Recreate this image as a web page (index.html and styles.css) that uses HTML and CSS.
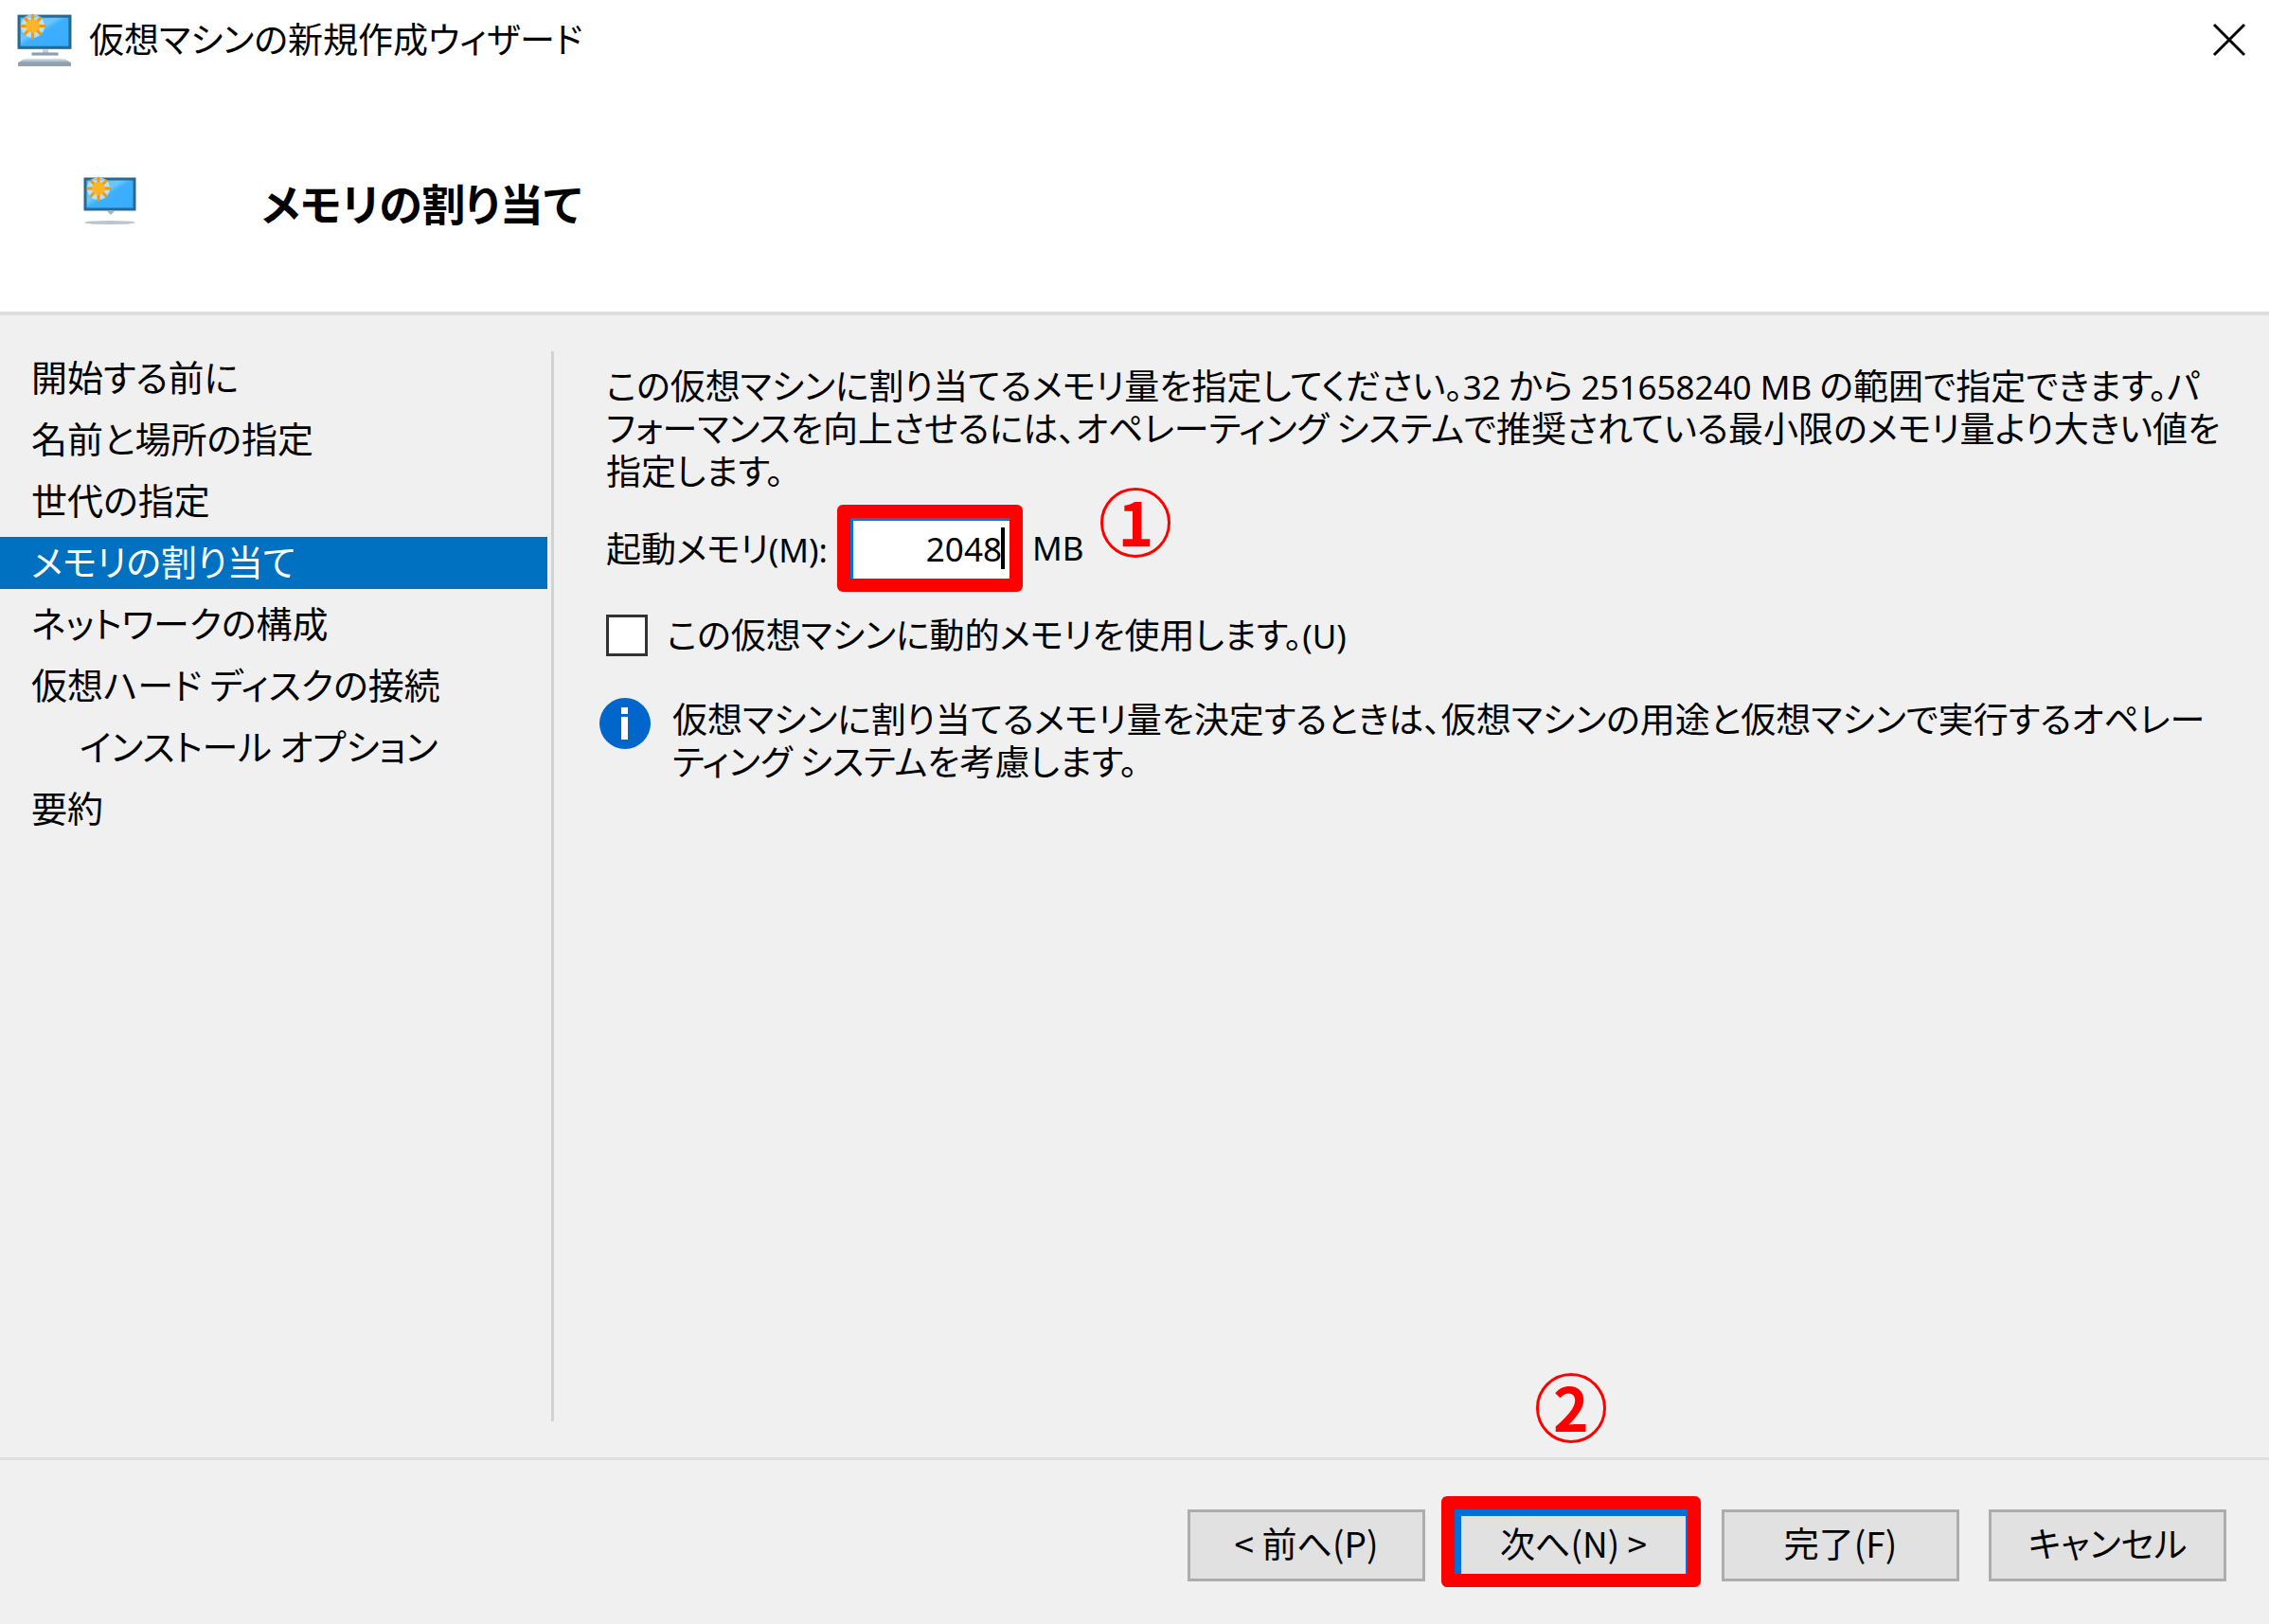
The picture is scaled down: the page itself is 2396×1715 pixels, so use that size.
FILE: index.html
```html
<!DOCTYPE html>
<html lang="ja">
<head>
    <meta charset="utf-8"/>
    <meta name="viewport" content="width=device-width, initial-scale=1"/>
    <title>仮想マシンの新規作成ウィザード</title>
    <link rel="stylesheet" href="styles.css">
</head>
<body>

    <!-- monitor icon, used in the title bar and in the header -->
    <svg class="symbols" aria-hidden="true">
        <defs>
            <linearGradient id="screen-fill" x1="0" y1="0" x2="1" y2="1">
                <stop offset="0" stop-color="#5cc0ff"/>
                <stop offset="0.4" stop-color="#6cc6ff"/>
                <stop offset="0.5" stop-color="#3cb0ff"/>
                <stop offset="1" stop-color="#38aaf8"/>
            </linearGradient>
            <linearGradient id="base-fill" x1="0" y1="0" x2="0" y2="1">
                <stop offset="0" stop-color="#e4e9ee"/>
                <stop offset="1" stop-color="#8496aa"/>
            </linearGradient>
        </defs>
        <symbol id="monitor" viewBox="0 0 56 38">
            <rect x="2" y="4" width="52" height="32" fill="url(#screen-fill)" stroke="#266a94" stroke-width="3"/>
            <circle cx="16" cy="14" r="12" fill="#d9eefb" opacity="0.7"/>
            <g stroke="#ee9a10" stroke-width="3" stroke-linecap="round">
                <path d="M16 3V26M5 14H28M8 6L24 22M24 6L8 22"/>
            </g>
            <circle cx="16" cy="14" r="7" fill="#ffb52a"/>
        </symbol>
    </svg>

    <header class="titlebar">
        <svg class="titlebar-icon" viewBox="0 0 56 56" aria-hidden="true">
            <use href="#monitor" width="56" height="38"/>
            <rect x="26" y="38" width="6" height="4" fill="#c4ccd4"/>
            <rect x="15" y="41" width="27" height="3" fill="#8f9dac"/>
            <path d="M1 52Q5 47 12 47H44Q51 47 55 52Z" fill="url(#base-fill)"/>
            <rect x="1" y="51" width="54" height="4" fill="#91a1b2"/>
        </svg>
        <span class="titlebar-text">仮想マシンの新規作成ウィザード</span>
        <button type="button" class="close" aria-label="閉じる">
            <svg viewBox="0 0 36 36" aria-hidden="true">
                <path d="M2 2L34 34M34 2L2 34" stroke="#000" stroke-width="3"/>
            </svg>
        </button>
    </header>

    <div class="banner">
        <svg class="banner-icon" viewBox="0 0 56 56" aria-hidden="true">
            <use href="#monitor" width="56" height="38"/>
            <path d="M25 38H33L29 42Z" fill="#aab4be"/>
            <ellipse cx="28" cy="50" rx="27" ry="2" fill="#b9c4d0"/>
        </svg>
        <h1>メモリの割り当て</h1>
    </div>

    <div class="content">
        <nav class="steps">
            <ul>
                <li>開始する前に</li>
                <li>名前と場所の指定</li>
                <li>世代の指定</li>
                <li class="active" aria-current="step">メモリの割り当て</li>
                <li>ネットワークの構成</li>
                <li>仮想ハード ディスクの接続</li>
                <li class="sub">インストール オプション</li>
                <li>要約</li>
            </ul>
        </nav>

        <main class="page">
            <p>この仮想マシンに割り当てるメモリ量を指定してください。<span class="latin">32</span> から <span class="latin">251658240 MB</span> の範囲で指定できます。パ<br>フォーマンスを向上させるには、オペレーティング システムで推奨されている最小限のメモリ量より大きい値を<br>指定します。</p>

            <div class="memory">
                <label for="memory">起動メモリ<span class="latin">(M):</span></label>
                <div class="marked field">
                    <input type="text" id="memory" class="latin" value="2048">
                    <span class="caret"></span>
                </div>
                <span class="latin">MB</span>
                <span class="number">1</span>
            </div>

            <div class="dynamic">
                <input type="checkbox" id="dynamic">
                <label for="dynamic">この仮想マシンに動的メモリを使用します。<span class="latin">(U)</span></label>
            </div>

            <div class="info">
                <svg class="info-icon" viewBox="0 0 56 56" aria-hidden="true">
                    <circle cx="28" cy="28" r="27" fill="#0066cc"/>
                    <rect x="24" y="11" width="7" height="7" fill="#fff"/>
                    <rect x="24" y="21" width="7" height="24" fill="#fff"/>
                </svg>
                <p>仮想マシンに割り当てるメモリ量を決定するときは、仮想マシンの用途と仮想マシンで実行するオペレー<br>ティング システムを考慮します。</p>
            </div>
        </main>
    </div>

    <footer class="buttons">
        <button type="button">&lt; 前へ(P)</button>
        <div class="marked next">
            <span class="number">2</span>
            <button type="button" class="default">次へ(N) &gt;</button>
        </div>
        <button type="button">完了(F)</button>
        <button type="button">キャンセル</button>
    </footer>

</body>
</html>
```
FILE: styles.css
```css
* {
    box-sizing: border-box;
}

body {
    margin: 0;
    min-height: 100vh;
    display: flex;
    flex-direction: column;
    background-color: #f0f0f0;
    color: #000;
    font-family: "Noto Sans CJK JP", sans-serif;
    font-size: 37px;
    line-height: 45px;
    font-feature-settings: "palt";
}

button, input {
    font: inherit;
    font-feature-settings: inherit;
    color: inherit;
    margin: 0;
}

p, h1, ul {
    margin: 0;
    padding: 0;
}

.latin {
    font-family: "Noto Sans", sans-serif;
    font-size: 35px;
    line-height: 1;
}

.symbols {
    position: absolute;
    width: 0;
    height: 0;
}

/* title bar */

.titlebar {
    display: flex;
    align-items: center;
    height: 84px;
    padding: 0 24px 0 18px;
    background-color: #fff;
}

.titlebar-icon {
    width: 58px;
    height: 58px;
    margin-right: 18px;
}

.titlebar-text {
    flex: 1;
    padding-bottom: 4px;
}

.close {
    width: 36px;
    height: 36px;
    padding: 0;
    border: none;
    background: none;
}

.close svg {
    display: block;
}

.banner {
    display: flex;
    align-items: center;
    height: 249px;
    padding: 12px 88px 0;
    gap: 132px;
    background-color: #fff;
    border-bottom: 4px solid #dfdfdf;
}

.banner-icon {
    width: 56px;
    height: 56px;
}

h1 {
    font-size: 46px;
    line-height: 56px;
    font-weight: bold;
}

/* steps and page */

.content {
    flex: 1;
    display: flex;
    padding: 38px 0;
}

.steps {
    flex: none;
    width: 585px;
    border-right: 3px solid #d2d2d2;
    font-size: 38px;
}

.steps ul {
    list-style: none;
    display: grid;
    gap: 10px;
    padding: 1px 4px 0 0;
}

.steps li {
    height: 55px;
    line-height: 50px;
    padding-left: 33px;
}

.steps .sub {
    padding-left: 84px;
}

.steps .active {
    background-color: #0070c0;
    color: #fff;
}

.page {
    flex: 1;
    padding: 13px 40px 0 55px;
}

.page p {
    white-space: nowrap;
}

.memory {
    display: flex;
    align-items: center;
    gap: 24px;
    height: 92px;
    margin-top: 14px;
}

.memory label, .memory > .latin {
    padding-bottom: 2px;
}

.dynamic {
    display: flex;
    align-items: center;
    gap: 20px;
    margin-top: 22px;
}

.dynamic label {
    padding-bottom: 2px;
}

.dynamic input {
    appearance: none;
    width: 44px;
    height: 44px;
    border: 3px solid #333;
    background-color: #fff;
}

.info {
    display: flex;
    gap: 22px;
    margin: 42px 0 0 -8px;
}

.info-icon {
    flex: none;
    width: 56px;
    height: 56px;
}

/* red marks */

.marked {
    position: relative;
}

.marked::after {
    content: "";
    position: absolute;
    inset: -14px;
    border: 14px solid #f00;
    border-radius: 6px;
    pointer-events: none;
}

.number {
    width: 74px;
    height: 74px;
    border: 3px solid #f00;
    border-radius: 50%;
    color: #f00;
    font-size: 64px;
    line-height: 62px;
    font-weight: bold;
    text-align: center;
}

.field {
    width: 168px;
    height: 64px;
}

.field input {
    width: 100%;
    height: 100%;
    padding: 0 8px 2px 0;
    border: 3px solid #0078d7;
    border-width: 3px 0 0 3px;
    background-color: #fff;
    text-align: right;
    outline: none;
}

.caret {
    position: absolute;
    top: 10px;
    right: 5px;
    width: 4px;
    height: 44px;
    background-color: #000;
}

.memory .number {
    margin: 0 0 54px -6px;
}

/* bottom buttons */

.buttons {
    display: flex;
    justify-content: flex-end;
    gap: 31px;
    padding: 52px 45px 45px;
    border-top: 3px solid #dfdfdf;
}

.buttons button {
    width: 251px;
    height: 76px;
    padding: 0 0 6px;
    border: 3px solid #adadad;
    background-color: #e1e1e1;
}

.buttons .default {
    border: 7px solid #0070d7;
}

.next::after {
    inset: -14px -9px -6px -14px;
}

.next .number {
    position: absolute;
    left: 86px;
    bottom: 146px;
}
```
